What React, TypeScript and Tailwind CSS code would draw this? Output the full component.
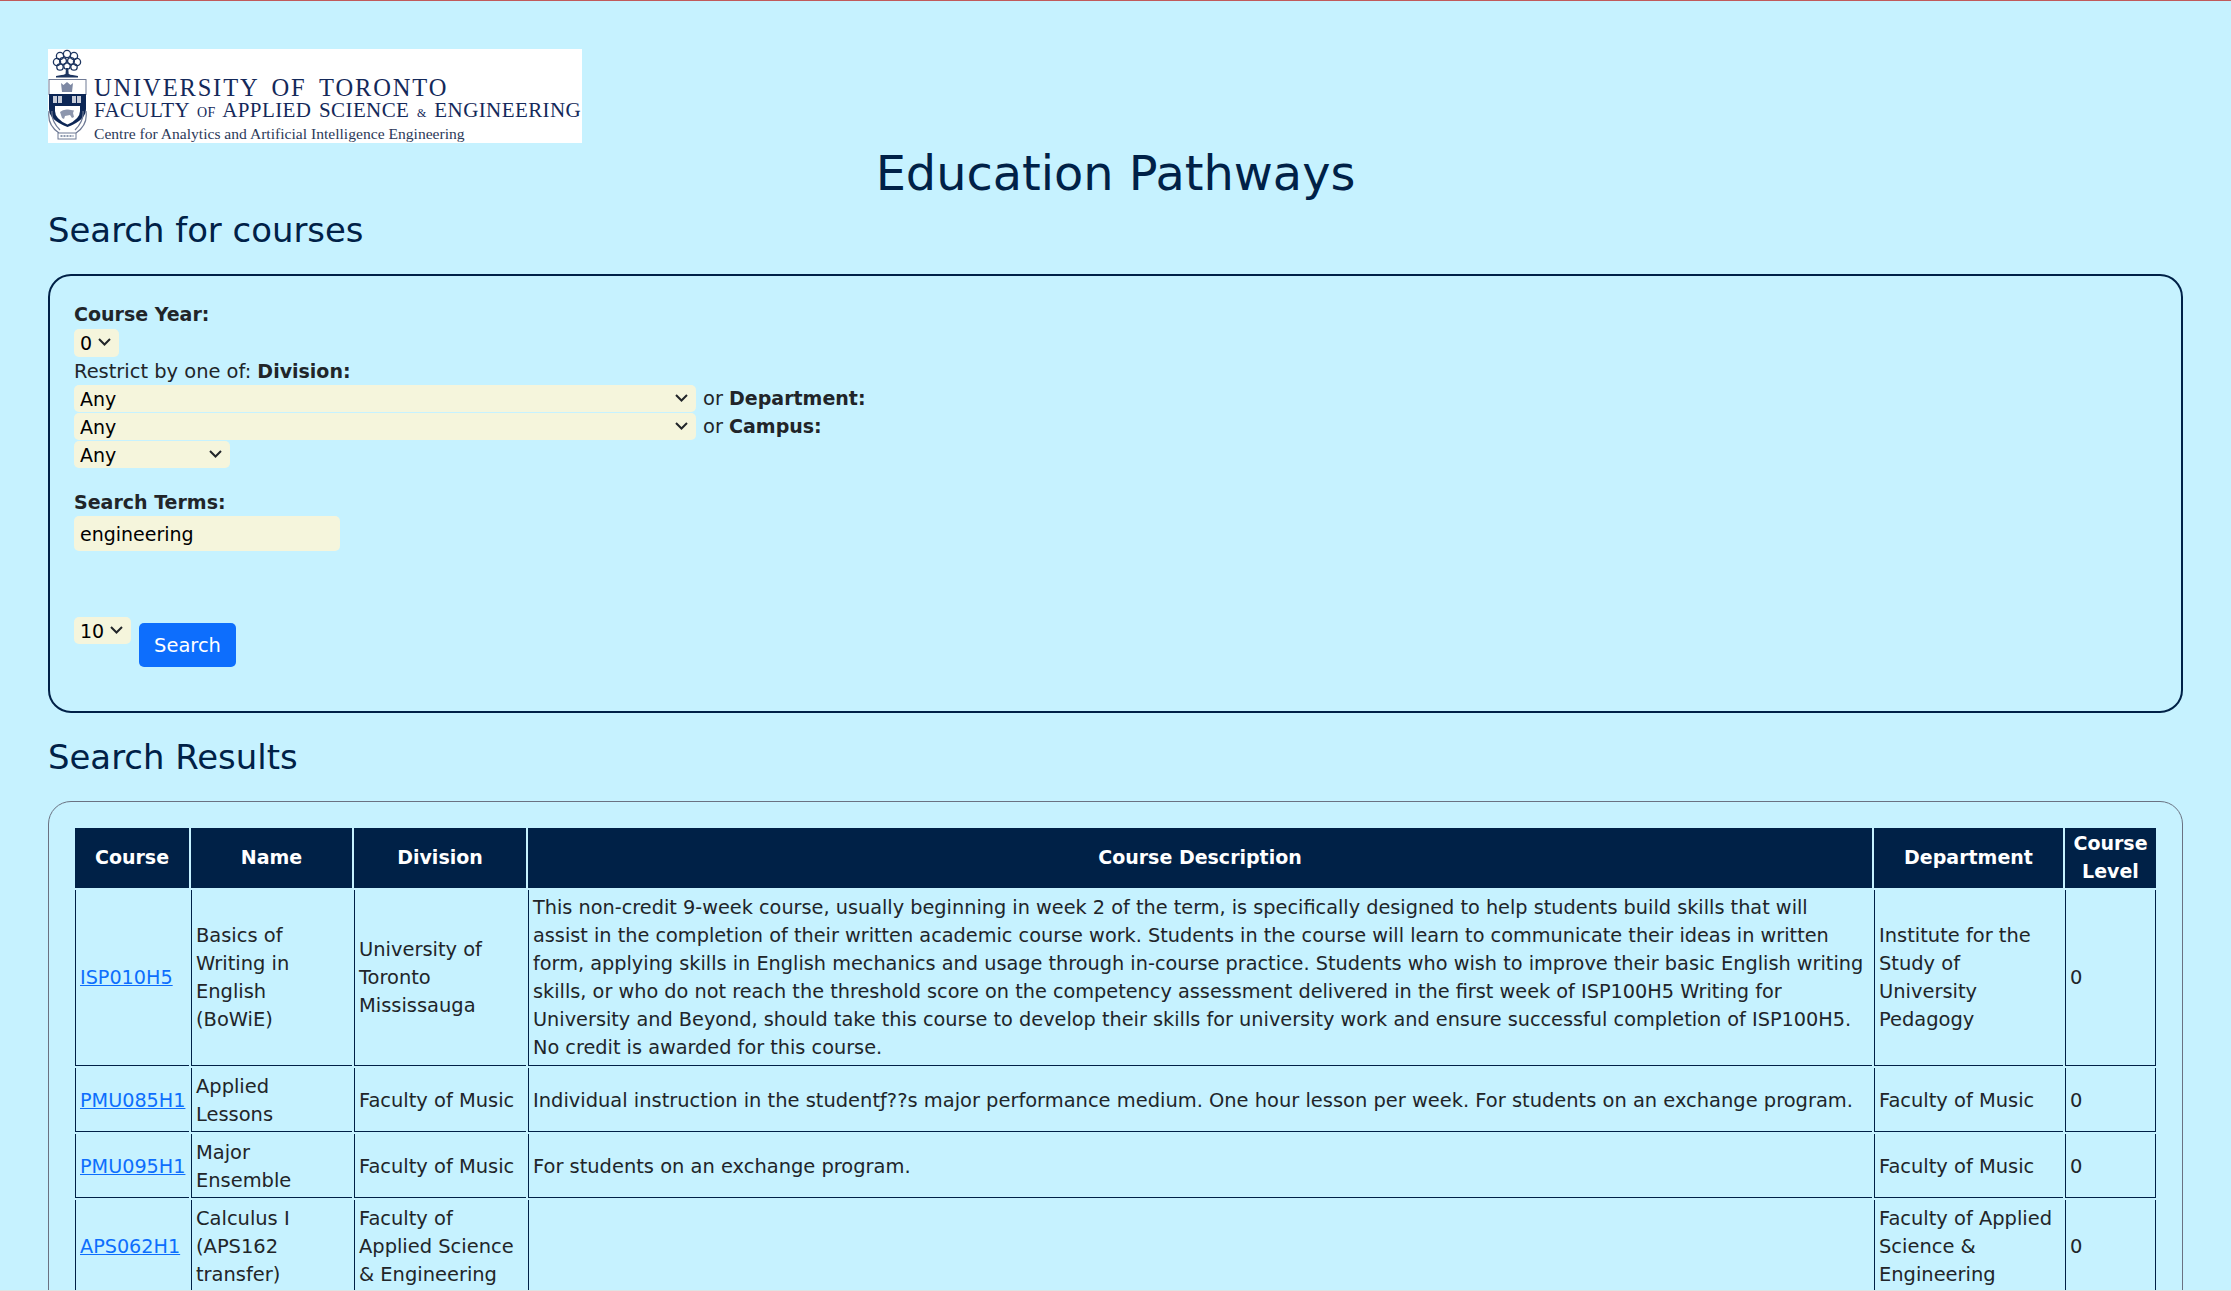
function Crest() {
  return (
    <svg width="44" height="94" viewBox="0 0 44 94" className="shrink-0">
      <g fill="none" stroke="#1d3560" strokeWidth="1.3">
        <circle cx="19" cy="5" r="3.6" /><circle cx="12" cy="7" r="3.6" /><circle cx="26" cy="7" r="3.6" />
        <circle cx="9" cy="13" r="3.6" /><circle cx="29" cy="13" r="3.6" /><circle cx="15" cy="12" r="3.4" />
        <circle cx="23" cy="12" r="3.4" /><circle cx="12" cy="18" r="3.2" /><circle cx="26" cy="18" r="3.2" /><circle cx="19" cy="17" r="3.2" />
      </g>
      <path d="M18 19 h2.2 l.5 6 2.8 1.5 h-9 l3 -1.5z" fill="#1d3560" />
      <path d="M8 27 q11 -3 22 0 v1.6 h-22z" fill="#1d3560" />
      <rect x="1" y="30.5" width="37" height="15" fill="#fff" stroke="#6f7a95" strokeWidth="1" />
      <path d="M13 34 l2.5 2 3.5 -3 3.500 3 2.500 -2 -1 9 h-10z" fill="#7d88a3" />
      <path d="M1 45 h37 v15 q0 11 -18.500 18 q-18.500 -7 -18.500 -18z" fill="#0c2655" />
      <path d="M5 47 h9 v7 h-9z M24 47 h9 v7 h-9z" fill="#c7ccd8" />
      <path d="M9.500 47 v7 M28.500 47 v7" stroke="#0c2655" strokeWidth="1" />
      <path d="M7 57 h25 v5 q0 8 -12.500 13.500 q-12.500 -5.500 -12.500 -13.500z" fill="#fff" />
      <path d="M12 63 q3 -3 8 -2.500 l6 1 -1 2.500 1 4 -2 1 -2 -3 -5 1 -1 3 -2 -1z" fill="#8d96ad" />
      <path d="M1 62 q-2 14 10 22 M38 62 q2 14 -10 22 M4 62 q-1 10 8 19 M35 62 q1 10 -8 19" fill="none" stroke="#6f7a95" strokeWidth="1.200" />
      <rect x="10" y="84" width="18" height="6" fill="#fff" stroke="#6f7a95" strokeWidth="1" />
      <path d="M12.500 87 h13" stroke="#1d3560" strokeWidth="1.200" strokeDasharray="2 1" />
    </svg>
  );
}

function Logo() {
  return (
    <div className="flex w-[534px] h-[94px] bg-white items-start overflow-hidden">
      <Crest />
      <div className="pl-[2px] text-[#14295a] [font-family:'Liberation_Serif',serif] whitespace-nowrap">
        <div className="text-[24.5px] leading-[23px] mt-[27px] tracking-[1.85px] [word-spacing:5px]">UNIVERSITY OF TORONTO</div>
        <div className="text-[21px] leading-[22px] tracking-[0.4px] [word-spacing:2px]">
          FACULTY <span className="text-[14px]">OF</span> APPLIED SCIENCE <span className="text-[12px]">&amp;</span> ENGINEERING
        </div>
        <div className="text-[15.600px] leading-[20px] text-[#2c3a5a]">Centre for Analytics and Artificial Intelligence Engineering</div>
      </div>
    </div>
  );
}

function Picker({ value, width, height, className = "" }: { value: string; width: string; height: string; className?: string }) {
  return (
    <div className={"relative " + width + " " + height + " " + className}>
      <select className="appearance-none block w-full h-full pl-[6px] text-[19px] bg-[#f5f5dc] text-black rounded-[5px] outline-none" defaultValue={value}>
        <option>{value}</option>
      </select>
      <svg width="13" height="8" viewBox="0 0 13 8" className="absolute top-[9px] right-[8px] pointer-events-none">
        <path d="M1 1 L6.500 6.500 L12 1" fill="none" stroke="#212529" strokeWidth="2" />
      </svg>
    </div>
  );
}

const rows = [
  {
    code: "ISP010H5",
    name: "Basics of Writing in English (BoWiE)",
    division: "University of Toronto Mississauga",
    desc: [
      "This non-credit 9-week course, usually beginning in week 2 of the term, is specifically designed to help students build skills that will",
      "assist in the completion of their written academic course work. Students in the course will learn to communicate their ideas in written",
      "form, applying skills in English mechanics and usage through in-course practice. Students who wish to improve their basic English writing",
      "skills, or who do not reach the threshold score on the competency assessment delivered in the first week of ISP100H5 Writing for",
      "University and Beyond, should take this course to develop their skills for university work and ensure successful completion of ISP100H5.",
      "No credit is awarded for this course.",
    ],
    descClass: "text-[19.300px] whitespace-nowrap",
    pad: "pt-[4px] pb-[3px]",
    dept: "Institute for the Study of University Pedagogy",
  },
  {
    code: "PMU085H1",
    name: "Applied Lessons",
    division: "Faculty of Music",
    desc: ["Individual instruction in the studentƒ??s major performance medium. One hour lesson per week. For students on an exchange program."],
    descClass: "",
    pad: "pt-[5px] pb-[2px]",
    dept: "Faculty of Music",
  },
  {
    code: "PMU095H1",
    name: "Major Ensemble",
    division: "Faculty of Music",
    desc: ["For students on an exchange program."],
    descClass: "",
    pad: "pt-[5px] pb-[2px]",
    dept: "Faculty of Music",
  },
  {
    code: "APS062H1",
    name: "Calculus I (APS162 transfer)",
    division: "Faculty of Applied Science & Engineering",
    desc: [],
    descClass: "",
    pad: "pt-[5px] pb-[2px]",
    dept: "Faculty of Applied Science & Engineering",
  },
];

const th = "bg-[#002147] text-white text-[19px] font-bold text-center px-[4px] pt-[1px] pb-[3px] align-middle";
const td = "border-l-[1px] border-b-[1px] border-[#002147] pl-[4px] pr-[3px] align-middle";

export default function App() {
  return (
    <div className="h-screen flex flex-col overflow-hidden bg-[#c6f2ff] border-t border-[#c05a5a] text-[#212529] text-[19.450px] leading-[28px] [font-family:'DejaVu_Sans',sans-serif]">
      <div className="flex-1 overflow-hidden px-[48px]">
        <div className="pt-[48px]"><Logo /></div>
        <h1 className="text-center text-[#002147] text-[47.800px] leading-[56px] mt-[3px]">Education Pathways</h1>
        <h2 className="text-[#002147] text-[33.900px] leading-[40px] mt-[9px]">Search for courses</h2>
        <div className="mt-[23px] h-[439px] border-2 border-[#002147] rounded-[23px] px-[24px] pt-[24px]">
          <div className="font-bold text-[19px]">Course Year:</div>
          <Picker value="0" width="w-[45px]" height="h-[28px]" className="mt-[1px]" />
          <div className="h-[27px] pt-[1px] leading-[27px]">Restrict by one of: <b className="text-[19px]">Division:</b></div>
          <div className="flex items-center h-[28px]">
            <Picker value="Any" width="w-[622px]" height="h-[27px]" />
            <span className="ml-[7px] pt-[1px]">or <b className="text-[19px]">Department:</b></span>
          </div>
          <div className="flex items-center h-[28px]">
            <Picker value="Any" width="w-[622px]" height="h-[27px]" />
            <span className="ml-[7px] pt-[1px]">or <b className="text-[19px]">Campus:</b></span>
          </div>
          <Picker value="Any" width="w-[156px]" height="h-[27px]" className="mt-[1px]" />
          <div className="font-bold text-[19px] mt-[20px]">Search Terms:</div>
          <input className="block w-[266px] h-[35px] px-[6px] text-[19px] bg-[#f5f5dc] text-black rounded-[5px] outline-none" defaultValue="engineering" />
          <div className="flex items-start mt-[66px]">
            <Picker value="10" width="w-[57px]" height="h-[27px]" />
            <button className="ml-[8px] mt-[6px] w-[97px] h-[44px] pt-[1px] bg-[#0d6efd] text-white rounded-[5px]">Search</button>
          </div>
        </div>
        <h2 className="text-[#002147] text-[33.900px] leading-[40px] mt-[25px]">Search Results</h2>
        <div className="mt-[23px] border border-gray-500 rounded-[23px] px-[24px] pt-[24px] pb-[24px]">
          <table className="table-fixed w-[2085px] border-separate border-spacing-[2px]">
            <colgroup>
              <col className="w-[114px]" />
              <col className="w-[161px]" />
              <col className="w-[172px]" />
              <col className="w-[1344px]" />
              <col className="w-[189px]" />
              <col className="w-[91px]" />
            </colgroup>
            <thead>
              <tr>
                <th className={th}>Course</th>
                <th className={th}>Name</th>
                <th className={th}>Division</th>
                <th className={th}>Course Description</th>
                <th className={th}>Department</th>
                <th className={th}>Course Level</th>
              </tr>
            </thead>
            <tbody>
              {rows.map((r) => (
                <tr key={r.code}>
                  <td className={td + " " + r.pad}><a href="#" className="text-[#0d6efd] text-[19.200px] underline">{r.code}</a></td>
                  <td className={td + " " + r.pad}>{r.name}</td>
                  <td className={td + " " + r.pad}>{r.division}</td>
                  <td className={td + " " + r.pad + " " + r.descClass}>
                    {r.desc.map((line) => (
                      <div key={line}>{line}</div>
                    ))}
                  </td>
                  <td className={td + " " + r.pad}>{r.dept}</td>
                  <td className={td + " " + r.pad + " border-r-[1px]"}>0</td>
                </tr>
              ))}
            </tbody>
          </table>
        </div>
      </div>
      <div className="h-[1px] shrink-0 bg-[#dfe3e3]" />
    </div>
  );
}
